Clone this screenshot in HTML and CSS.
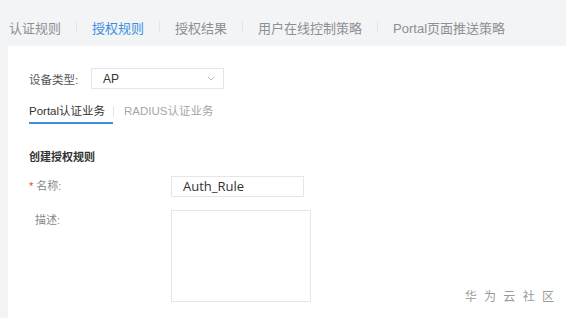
FILE: index.html
```html
<!DOCTYPE html>
<html lang="zh">
<head>
  <meta charset="UTF-8" />
  <title>授权规则</title>
  <link rel="stylesheet" href="styles.css">
</head>
<body>
  <div class="tabs">
    <span class="tab">认证规则</span>
    <span class="sep"></span>
    <span class="tab active">授权规则</span>
    <span class="sep"></span>
    <span class="tab">授权结果</span>
    <span class="sep"></span>
    <span class="tab">用户在线控制策略</span>
    <span class="sep"></span>
    <span class="tab">Portal页面推送策略</span>
  </div>

  <div class="panel">
    <div class="row device">
      <label class="dlabel">设备类型:</label>
      <div class="select">
        <span>AP</span>
        <svg width="8" height="5" viewBox="0 0 8 5"><path d="M1 1l3 3 3-3" fill="none" stroke="#b4b8bf" stroke-width="1"/></svg>
      </div>
    </div>

    <div class="subtabs">
      <span class="subtab active">Portal认证业务</span>
      <span class="subsep"></span>
      <span class="subtab">RADIUS认证业务</span>
    </div>

    <h2 class="title">创建授权规则</h2>

    <div class="row field name">
      <label class="flabel"><span class="star">*</span>名称:</label>
      <div class="input">Auth_Rule</div>
    </div>

    <div class="row field desc">
      <label class="flabel">描述:</label>
      <div class="textarea"></div>
    </div>

    <div class="mark">华 为 云 社 区</div>
  </div>
</body>
</html>
```

FILE: styles.css
```css
body { margin: 0; background: #f3f4f6; font-family: "Liberation Sans", "Noto Sans CJK SC", sans-serif; color: #333; overflow: hidden; }
.tabs { height: 46px; display: flex; align-items: center; padding-left: 9px; padding-top: 8px; box-sizing: border-box; font-size: 13px; color: #8c8f94; }
.tab { white-space: nowrap; }
.tab.active { color: #3d8fde; }
.sep { width: 1px; height: 12px; background: #e2e4e8; margin: 0 15px; }
.panel { position: relative; margin-left: 8px; background: #fff; height: 272px; padding: 22px 0 0 21px; box-sizing: border-box; }
.row { display: flex; align-items: center; }
.dlabel { font-size: 11.5px; color: #555; width: 62px; }
.select { width: 133px; height: 21px; border: 1px solid #e4e6ea; box-sizing: border-box; display: flex; align-items: center; justify-content: space-between; padding: 0 8px 0 11px; font-size: 12px; color: #333; }
.subtabs { display: flex; align-items: flex-start; margin-top: 14px; font-size: 11.5px; line-height: 16px; }
.subtab { color: #a3a6ab; padding-bottom: 3px; }
.subtab.active { color: #333; border-bottom: 2px solid #3d8fde; padding-right: 8px; }
.subsep { width: 1px; height: 11px; background: #e2e4e8; margin: 3px 10px 0 0; }
.title { font-size: 11px; font-weight: bold; color: #333; margin: 24px 0 0; font-family: "Noto Sans CJK SC", sans-serif; }
.field { align-items: flex-start; }
.flabel { width: 142px; font-size: 11px; color: #888; padding-left: 6px; box-sizing: border-box; }
.star { color: #e0443b; margin-left: -6px; margin-right: 3px; }
.name { margin-top: 12px; }
.name .flabel { line-height: 21px; }
.input { width: 133px; height: 21px; border: 1px solid #e4e6ea; box-sizing: border-box; font-size: 13px; line-height: 19px; padding-left: 11px; color: #333; font-family: "Open Sans", sans-serif; }
.desc { margin-top: 13px; }
.desc .flabel { line-height: 20px; }
.textarea { width: 140px; height: 92px; border: 1px solid #e4e6ea; box-sizing: border-box; }
.mark { position: absolute; right: 10px; bottom: 14px; font-size: 12px; color: #9a9a9a; letter-spacing: 2px; }
```
